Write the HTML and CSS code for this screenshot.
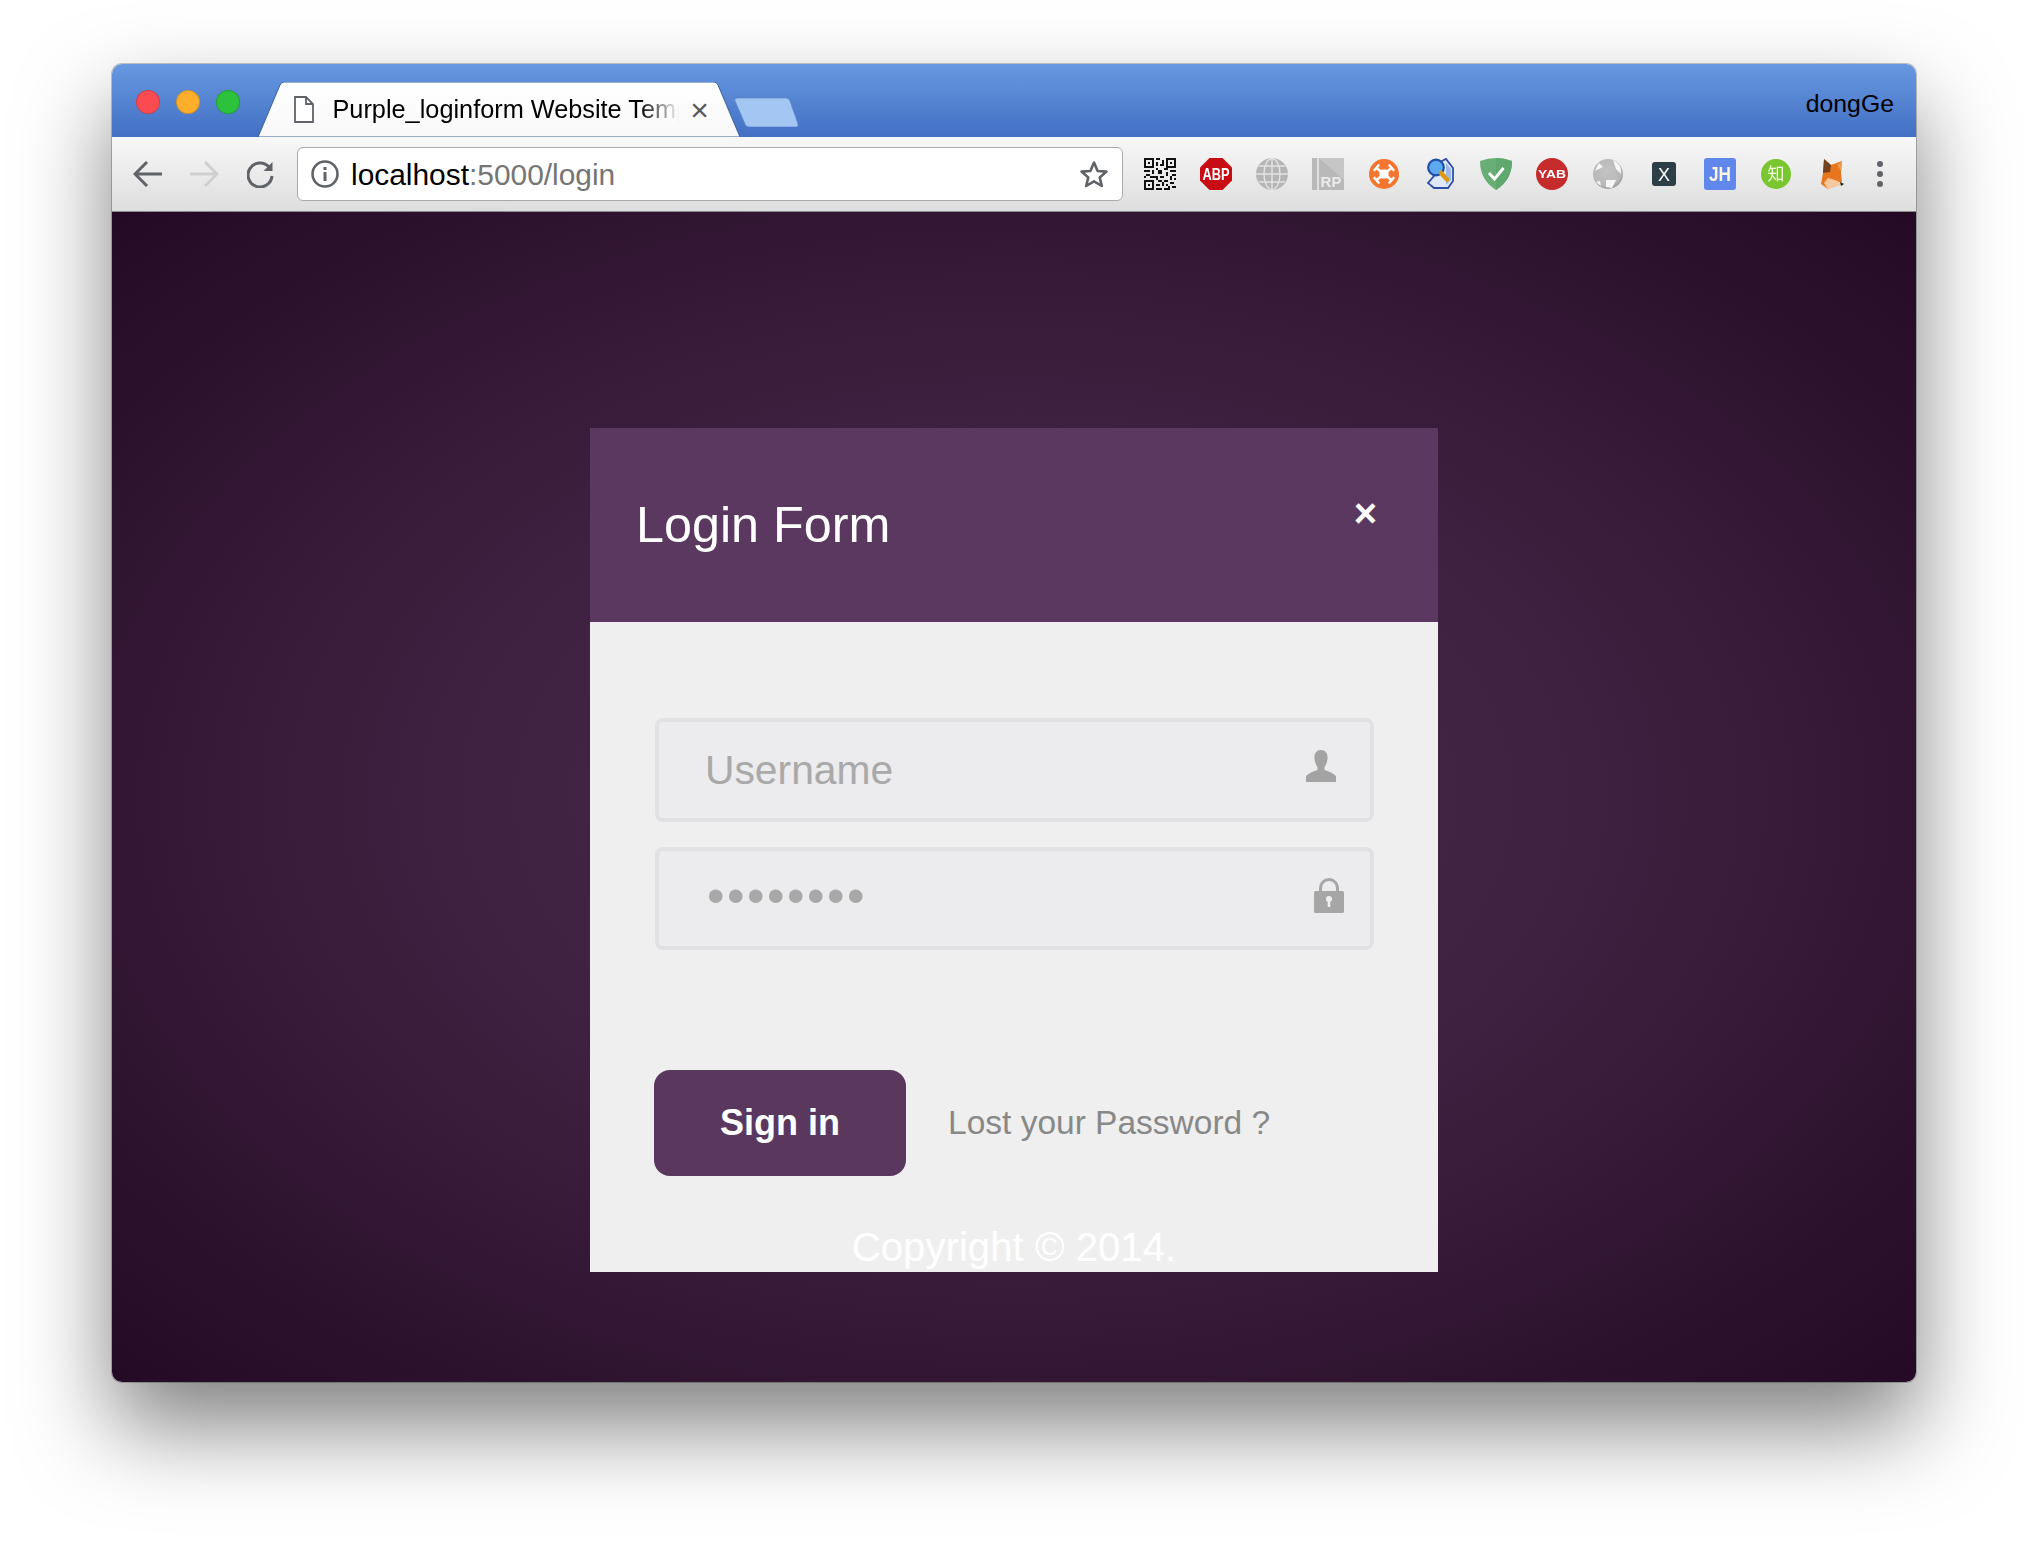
FILE: index.html
```html
<!DOCTYPE html>
<html lang="en">
<head>
<meta charset="utf-8">
<title>Purple_loginform Website Template</title>
<link rel="stylesheet" href="styles.css">
</head>
<body>
<div class="window">
  <header class="tabbar">
    <div class="lights">
      <span class="light light-red"></span>
      <span class="light light-yellow"></span>
      <span class="light light-green"></span>
    </div>
    <div class="tab">
      <svg class="tab-shape" viewBox="0 0 482 55" preserveAspectRatio="none">
        <defs><linearGradient id="tabfill" x1="0" y1="0" x2="0" y2="1"><stop offset="0" stop-color="#ffffff"/><stop offset="1" stop-color="#f8f8f8"/></linearGradient></defs>
        <path d="M0 55 L22 3 Q23 0 26 0 L456 0 Q459 0 460 3 L482 55 Z" fill="url(#tabfill)" stroke="#3b5f9f" stroke-width="1"/>
      </svg>
      <svg class="file-icon" width="20" height="27" viewBox="0 0 20 27"><path d="M1 1 H12 L19 8 V26 H1 Z M12 1 V8 H19" fill="#fff" stroke="#5f6368" stroke-width="1.8"/></svg>
      <span class="tab-title">Purple_loginform Website Temp</span>
      <span class="tab-close">×</span>
    </div>
    <svg class="newtab" width="64" height="29" viewBox="0 0 64 29"><path d="M3 0 H52 Q55 0 56 3 L64 26 Q64.500 29 62 29 H15 Q12 29 11 26 L1 3 Q0 0 3 0 Z" fill="#a3c7f2" stroke="#5d8acb" stroke-width=".8"/></svg>
    <span class="profile">dongGe</span>
  </header>

  <nav class="toolbar">
    <button class="nav-btn" type="button" aria-label="Back"><svg width="30" height="28" viewBox="0 0 30 28"><path d="M29 14 H3 M14 2 L2 14 L14 26" fill="none" stroke="#5f6368" stroke-width="3"/></svg></button>
    <button class="nav-btn" type="button" aria-label="Forward"><svg width="30" height="28" viewBox="0 0 30 28"><path d="M1 14 H27 M16 2 L28 14 L16 26" fill="none" stroke="#cfcfcf" stroke-width="3"/></svg></button>
    <button class="nav-btn" type="button" aria-label="Reload"><svg width="28" height="28" viewBox="1 0 28 28"><path d="M23 7 A12 12 0 1 0 26 16" fill="none" stroke="#5f6368" stroke-width="3"/><path d="M26.500 2 V11 H17.500 Z" fill="#5f6368"/></svg></button>
    <div class="omnibox">
      <svg class="info-icon" width="28" height="28" viewBox="0 0 28 28"><circle cx="14" cy="14" r="12.500" fill="none" stroke="#5f6368" stroke-width="2.600"/><rect x="12.500" y="12" width="3" height="9" fill="#5f6368"/><rect x="12.500" y="7" width="3" height="3" fill="#5f6368"/></svg>
      <span class="url"><span class="url-host">localhost</span>:5000/login</span>
      <svg class="star" width="30" height="28" viewBox="0 0 30 28"><path d="M15 2.500 L18.600 11 L27.500 11.600 L20.700 17.400 L22.800 26 L15 21.300 L7.200 26 L9.300 17.400 L2.500 11.600 L11.400 11 Z" fill="none" stroke="#5f6368" stroke-width="2.600" stroke-linejoin="round"/></svg>
    </div>
    <div class="extensions">
      <span class="ext"><svg width="32" height="32" viewBox="0 0 32 32" shape-rendering="crispEdges"><path fill="#111" d="M0 0h10v10H0zM22 0h10v10H22zM0 22h10v10H0z"/><path fill="#eee" d="M2 2h6v6H2zM24 2h6v6H24zM2 24h6v6H2z"/><path fill="#111" d="M4 4h2v2H4zM26 4h2v2H26zM4 26h2v2H4zM12 0h4v2h-4zM18 2h2v4h-2zM12 4h2v4h-2zM16 6h4v2h-4zM12 10h2v2h-2zM0 12h6v2H0zM8 12h2v4H8zM2 16h4v2H2zM0 18h2v2H0zM6 18h6v2H6zM14 12h4v4h-4zM20 10h4v2h-4zM26 12h6v2h-6zM22 14h2v4h-2zM28 16h4v2h-4zM12 18h2v4h-2zM16 18h4v2h-4zM26 18h2v4h-2zM30 20h2v2h-2zM14 22h4v2h-4zM20 22h4v2h-4zM12 26h4v2h-4zM18 24h2v4h-2zM22 26h2v2h-2zM26 24h4v2h-4zM28 28h4v2h-4zM12 30h6v2h-6zM20 30h6v2h-6zM24 28h2v2h-2z"/></svg></span>
      <span class="ext"><svg width="32" height="32" viewBox="0 0 32 32"><path fill="#c70d13" d="M9.500 0h13L32 9.500v13L22.500 32h-13L0 22.500v-13z"/><text class="ext-label ext-abp" x="16" y="21.800" textLength="27" lengthAdjust="spacingAndGlyphs">ABP</text></svg></span>
      <span class="ext"><svg width="32" height="32" viewBox="0 0 32 32"><circle cx="16" cy="16" r="16" fill="#b5b5b5"/><g fill="none" stroke="#e4e4e4" stroke-width="1.400"><ellipse cx="16" cy="16" rx="8" ry="15.500"/><path d="M16 0V32M3 8H29M0 16H32M3 24H29"/></g></svg></span>
      <span class="ext"><svg width="32" height="32" viewBox="0 0 32 32"><rect width="32" height="32" fill="#b9b9b9"/><rect x="5" width="2" height="32" fill="#dedede"/><path d="M7 0 L32 22 V0 Z" fill="#c6c6c6"/><text class="ext-label ext-rp" x="19" y="29">RP</text></svg></span>
      <span class="ext"><svg width="30" height="30" viewBox="0 0 30 30"><circle cx="15" cy="15" r="15" fill="#f47530"/><g stroke="#fff" stroke-width="2.600" stroke-linecap="round" fill="none"><path d="M8 9.500 L12 12.500 M22 9.500 L18 12.500 M8 20.500 L12 17.500 M22 20.500 L18 17.500"/><path d="M5.500 11 L9.500 6.500 M24.500 11 L20.500 6.500 M5.500 19 L9.500 23.500 M24.500 19 L20.500 23.500"/></g><rect x="10.500" y="10.500" width="9" height="9" rx="3" fill="#fff"/></svg></span>
      <span class="ext"><svg width="28" height="32" viewBox="-1 0 28 32"><path d="M13 4 L19 1 L26 10 L26 23 L21 30 L7 30 L1 25 L7 18 Z" fill="#dfe9f9" stroke="#2c4ea5" stroke-width="1.800"/><path d="M19 5 L24 11 V22 L19 27 Z" fill="#9db8e8"/><circle cx="9" cy="9.500" r="7.800" fill="#5fa9ef" stroke="#1f4ea8" stroke-width="2.200"/><path d="M14 15 L20 21.500" stroke="#e09a12" stroke-width="4.500" stroke-linecap="round"/></svg></span>
      <span class="ext"><svg width="32" height="32" viewBox="0 0 32 32"><path d="M16 0 Q24 0 32 3 Q32 22 16 32 Q0 22 0 3 Q8 0 16 0 Z" fill="#68ae76"/><path d="M16 0 Q24 0 32 3 Q32 22 16 32 Z" fill="#5fa86d"/><path d="M9 15 L14.500 21 L23.500 10" fill="none" stroke="#fff" stroke-width="2.800"/></svg></span>
      <span class="ext"><svg width="32" height="32" viewBox="0 0 32 32"><circle cx="16" cy="16" r="16" fill="#c62b2b"/><text class="ext-label ext-yab" x="16" y="20.300" textLength="28" lengthAdjust="spacingAndGlyphs">YAB</text></svg></span>
      <span class="ext"><svg width="30" height="32" viewBox="0 0 30 32"><defs><radialGradient id="earth" cx=".45" cy=".4" r=".65"><stop offset="0" stop-color="#c4c4c4"/><stop offset=".75" stop-color="#b8b8b8"/><stop offset="1" stop-color="#8d8d8d"/></radialGradient></defs><circle cx="15" cy="16" r="15" fill="url(#earth)"/><path d="M20 2 Q29 6 28 16 L23 11 Z M13 22 L23 22 L19 30 L13 29 Z M2 13 L6 5 L10 9 Z M3 24 L7 23 L8 28 Z" fill="#f6f6f6"/></svg></span>
      <span class="ext"><svg width="24" height="24" viewBox="0 0 24 24"><rect width="24" height="24" rx="3" fill="#2c3e46"/><text class="ext-label ext-x" x="12" y="18.500">X</text></svg></span>
      <span class="ext"><svg width="32" height="32" viewBox="0 0 32 32"><rect width="32" height="32" rx="3" fill="#6287ec"/><text class="ext-label ext-jh" x="16" y="23" textLength="22" lengthAdjust="spacingAndGlyphs">JH</text></svg></span>
      <span class="ext"><svg width="30" height="30" viewBox="0 0 30 30"><circle cx="15" cy="15" r="15" fill="#7ac631"/><text class="ext-label ext-zhi" x="15" y="21">知</text></svg></span>
      <span class="ext"><svg width="24" height="30" viewBox="0 0 24 30"><path d="M4 0 L11 6 L22 2 L21 14 L22 23 L15 27 L8 30 L1 25 L3 14 Z" fill="#e8761f"/><path d="M4 0 L11 6 L10 13 L3 14 Z" fill="#74401d"/><path d="M17 6 L22 2 L21 12 Z" fill="#f09a4d"/><path d="M8 19 L15 21 L24 25 L15 28 L8 30 L4 24 Z" fill="#f6c8a0"/><path d="M20 23 L24 25 L21 27 Z" fill="#222"/></svg></span>
    </div>
    <button class="menu-btn" type="button" aria-label="Menu"><span class="menu-dot"></span><span class="menu-dot"></span><span class="menu-dot"></span></button>
  </nav>

  <main class="page">
    <section class="modal">
      <div class="modal-head">
        <h1 class="modal-title">Login Form</h1>
        <span class="modal-close">×</span>
      </div>
      <form class="modal-body">
        <div class="fields">
          <div class="field field-name">
            <span class="field-text">Username</span>
            <svg class="field-user" width="30" height="32" viewBox="0 0 30 32"><path d="M15 0 C20 0 22 4 21.500 9 C21 13 20 15 18.500 17 V20 Q26 22 30 26 V32 H0 V26 Q4 22 11.500 20 V17 C10 15 9 13 8.500 9 C8 4 10 0 15 0 Z" fill="#a3a3a3"/></svg>
          </div>
          <div class="field field-pass">
            <span class="field-dots">••••••••</span>
            <svg class="field-lock" width="30" height="35" viewBox="0 0 30 35"><path d="M6.500 15 V10 A8.500 8.500 0 0 1 23.500 10 V15" fill="none" stroke="#a6a6a6" stroke-width="3"/><rect y="13" width="30" height="22" rx="1.500" fill="#a6a6a6"/><circle cx="15" cy="21" r="3" fill="#efefef"/><rect x="13.700" y="21" width="2.600" height="8" fill="#efefef"/></svg>
          </div>
        </div>
        <div class="actions">
          <button class="signin" type="button">Sign in</button>
          <a class="lost" href="#">Lost your Password ?</a>
        </div>
      </form>
      <footer class="copyright">Copyright © 2014.</footer>
    </section>
  </main>
</div>
</body>
</html>
```
FILE: styles.css
```css
* { box-sizing: border-box; }

html, body {
  margin: 0;
  background: #fff;
}

body {
  padding: 64px 112px 0;
  overflow: hidden;
  height: 1542px;
  font-family: "Liberation Sans", Arial, sans-serif;
}

.window {
  width: 1804px;
  height: 1318px;
  display: flex;
  flex-direction: column;
  border-radius: 10px;
  overflow: hidden;
  box-shadow: 0 0 0 1px rgba(0, 0, 0, .22), 0 44px 90px rgba(0, 0, 0, .5);
}

/* tab strip */
.tabbar {
  flex: 0 0 73px;
  display: flex;
  background: linear-gradient(#6898e0, #4370c4);
}

.lights {
  display: flex;
  gap: 16px;
  margin: 26px 0 0 24px;
  align-self: flex-start;
}

.light {
  width: 24px;
  height: 24px;
  border-radius: 50%;
  border: 1px solid rgba(0, 0, 0, .16);
}
.light-red { background: #fc4b50; }
.light-yellow { background: #fdae2a; }
.light-green { background: #2cc23b; }

.tab {
  position: relative;
  flex: 0 0 482px;
  height: 55px;
  margin: 9px 0 0 17.5px;
  padding: 0 0 0 36px;
  display: flex;
  align-items: center;
  align-self: flex-end;
}

.tab-shape {
  position: absolute;
  inset: 0;
  width: 100%;
  height: 100%;
}

.file-icon {
  position: relative;
  flex: none;
  margin: 0 19px 1px 0;
}

.tab-title {
  position: relative;
  flex: 0 0 356px;
  white-space: nowrap;
  font-size: 25.300px;
  color: #000;
  -webkit-mask-image: linear-gradient(90deg, #000 86%, transparent 97%);
  mask-image: linear-gradient(90deg, #000 86%, transparent 97%);
}

.tab-close {
  position: relative;
  font-size: 32px;
  line-height: 32px;
  color: #55585c;
}

.newtab {
  flex: none;
  align-self: flex-end;
  margin: 0 0 10px -5.5px;
}

.profile {
  margin: 26px 22px 0 auto;
  font-size: 24.800px;
  line-height: 28px;
  color: #000;
}

/* toolbar */
.toolbar {
  flex: 0 0 75px;
  display: flex;
  align-items: center;
  padding: 0 0 1px 7.5px;
  background: linear-gradient(#f8f8f8, #dedede);
  border-bottom: 1px solid #8d8a8d;
}

.nav-btn {
  flex: 0 0 56.5px;
  height: 40px;
  padding: 0;
  border: 0;
  background: none;
  display: flex;
  align-items: center;
  justify-content: center;
}

.omnibox {
  flex: 0 0 826px;
  height: 54px;
  margin-left: 8px;
  display: flex;
  align-items: center;
  padding: 0 13px 0 13px;
  background: #fff;
  border: 1px solid #a9a9a9;
  border-radius: 6px;
}

.info-icon { flex: none; }

.url {
  margin: 2px 0 0 12px;
  font-size: 29.900px;
  color: #757575;
  white-space: nowrap;
}

.url-host { color: #000; }

.star {
  flex: none;
  margin-left: auto;
}

.extensions {
  display: flex;
  margin-left: 9px;
}

.ext {
  flex: 0 0 56px;
  height: 40px;
  display: flex;
  align-items: center;
  justify-content: center;
  filter: blur(.4px);
}

.ext svg { overflow: visible; }

.ext-label {
  font-family: "Liberation Sans", Arial, sans-serif;
  text-anchor: middle;
  font-weight: 700;
  fill: #fff;
}
.ext-abp { font-size: 16.700px; }
.ext-rp { font-size: 15px; fill: #eaeaea; }
.ext-yab { font-size: 11.500px; }
.ext-x { font-size: 18px; font-weight: 400; }
.ext-jh { font-size: 20px; fill: #fbf6dc; }
.ext-zhi { font-family: "Noto Sans CJK SC", sans-serif; font-size: 17px; font-weight: 400; fill: #f4fbe0; }

.menu-btn {
  flex: 0 0 40px;
  padding: 0;
  border: 0;
  background: none;
  display: flex;
  flex-direction: column;
  align-items: center;
  gap: 4px;
}

.menu-dot {
  width: 6px;
  height: 6px;
  border-radius: 50%;
  background: #5f6368;
}

/* page */
.page {
  flex: 1;
  display: flex;
  justify-content: center;
  align-items: flex-start;
  padding-top: 216px;
  background: radial-gradient(ellipse farthest-corner at 50% 50%, #472849 0%, #3e2140 45%, #240a24 100%);
}

.modal {
  width: 848px;
  height: 844px;
  overflow: hidden;
  display: flex;
  flex-direction: column;
  background: #efefef;
}

.modal-head {
  flex: 0 0 194px;
  display: flex;
  justify-content: space-between;
  align-items: center;
  padding: 0 61px 0 46px;
  background: #5a3860;
}

.modal-title {
  margin: 0;
  font-size: 50.300px;
  font-weight: 400;
  line-height: 60px;
  color: #fff;
}

.modal-close {
  margin-bottom: 24px;
  font-size: 40px;
  line-height: 44px;
  font-weight: 700;
  color: #fff;
}

.modal-body {
  display: flex;
  flex-direction: column;
  padding: 96px 64px 0 64px;
}

.fields {
  display: flex;
  flex-direction: column;
  gap: 25px;
  margin-left: 1px;
}

.field {
  height: 103.500px;
  display: flex;
  align-items: center;
  justify-content: space-between;
  background: #ecebed;
  border: 4px solid #e1e0e3;
  border-radius: 8px;
}

.field-name { padding: 0 34px 0 46px; }
.field-pass { padding: 0 26px 0 48px; }

.field-text {
  font-size: 40.800px;
  line-height: 48px;
  color: #a9a9a9;
}

.field-dots {
  font-size: 50px;
  line-height: 48px;
  letter-spacing: 2.500px;
  color: #a8a8a8;
  margin-top: -4px;
}

.field-user { margin-top: -8px; filter: blur(.4px); }
.field-lock { margin-top: -6px; filter: blur(.4px); }

.actions {
  display: flex;
  align-items: center;
  gap: 42px;
  margin-top: 120px;
}

.signin {
  width: 252px;
  height: 106px;
  padding: 0;
  border: 0;
  border-radius: 16px;
  background: #5a385e;
  color: #fff;
  font-family: inherit;
  font-size: 36px;
  font-weight: 700;
}

.lost {
  font-size: 33.500px;
  color: #888;
  text-decoration: none;
}

.copyright {
  margin-top: 48px;
  font-size: 40.200px;
  line-height: 48px;
  text-align: center;
  color: #fff;
}
```
